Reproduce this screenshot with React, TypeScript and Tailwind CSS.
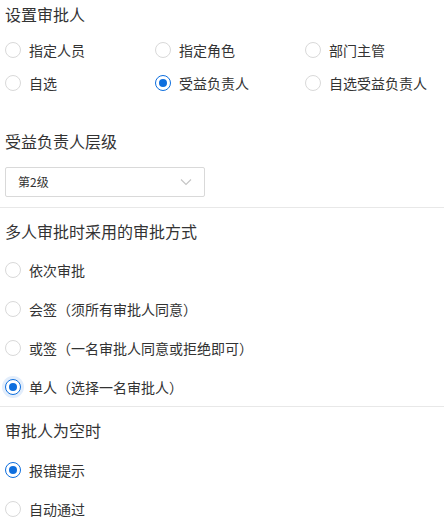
import React from "react";

const Radio = ({ label, checked, focus }: { label: string; checked?: boolean; focus?: boolean }) => (
  <label className="flex items-center gap-2 cursor-pointer">
    <span
      className={
        "flex h-4 w-4 shrink-0 items-center justify-center rounded-full border bg-white " +
        (checked ? "border-[#0d6ede]" : "border-[#d9d9d9]") +
        (focus ? " shadow-[0_0_0_3px_rgba(13,110,222,0.12)]" : "")
      }
    >
      {checked && <span className="h-2 w-2 rounded-full bg-[#0d6ede]" />}
    </span>
    <span className="text-[14px] leading-[20px] text-[#333]">{label}</span>
  </label>
);

const Title = ({ children, className = "" }: { children: React.ReactNode; className?: string }) => (
  <div className={"px-[5px] text-[16px] leading-[22px] text-[#333] " + className}>{children}</div>
);

export default function App() {
  return (
    <div
      className="w-[444px] h-[525px] overflow-hidden bg-white pt-[3px]"
      style={{ fontFamily: '"Noto Sans CJK SC", "Noto Sans", sans-serif' }}
    >
      <Title>设置审批人</Title>
      <div className="mt-[8px] grid grid-cols-[150px_150px_144px] px-[5px]">
        {[
          ["指定人员", false],
          ["指定角色", false],
          ["部门主管", false],
          ["自选", false],
          ["受益负责人", true],
          ["自选受益负责人", false],
        ].map(([l, c]) => (
          <div key={l as string} className="flex h-[33px] items-center">
            <Radio label={l as string} checked={c as boolean} />
          </div>
        ))}
      </div>

      <Title className="mt-[31px]">受益负责人层级</Title>
      <div className="mt-[15px] px-[5px]">
        <div className="flex h-[30px] w-[200px] items-center justify-between rounded-[2px] border border-[#d9d9d9] pl-[12px] pr-[12px]">
          <span className="text-[12px] text-[#333]">第2级</span>
          <svg width="12" height="8" viewBox="0 0 12 8" fill="none">
            <path d="M1 1.5 L6 6.5 L11 1.5" stroke="#c4c4c4" strokeWidth="1.1" />
          </svg>
        </div>
      </div>
      <div className="mt-[10px] h-px bg-[#e8e8e8]" />

      <Title className="mt-[12px]">多人审批时采用的审批方式</Title>
      <div className="mt-[8px] flex flex-col px-[5px]">
        {[
          ["依次审批", false, false],
          ["会签（须所有审批人同意）", false, false],
          ["或签（一名审批人同意或拒绝即可）", false, false],
          ["单人（选择一名审批人）", true, true],
        ].map(([l, c, f]) => (
          <div key={l as string} className="flex h-[39px] items-center">
            <Radio label={l as string} checked={c as boolean} focus={f as boolean} />
          </div>
        ))}
      </div>
      <div className="h-px bg-[#e8e8e8]" />

      <Title className="mt-[12px]">审批人为空时</Title>
      <div className="mt-[9px] flex flex-col px-[5px]">
        {[
          ["报错提示", true],
          ["自动通过", false],
        ].map(([l, c]) => (
          <div key={l as string} className="flex h-[39px] items-center">
            <Radio label={l as string} checked={c as boolean} />
          </div>
        ))}
      </div>
    </div>
  );
}
